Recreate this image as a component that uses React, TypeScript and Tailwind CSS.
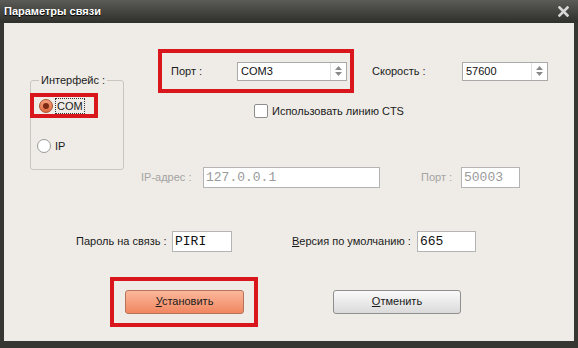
import React from "react";

const font = { fontFamily: '"Liberation Sans", Arial, sans-serif' };

const Combo = ({ value, width }: { value: string; width: string }) => (
  <div
    className={`${width} shrink-0 h-[19px] flex bg-white border border-[#a9a9a9] text-[11px] text-[#111]`}
  >
    <div className="flex-1 pl-[3px] leading-[17px]">{value}</div>
    <div className="w-[16px] flex flex-col items-center justify-center gap-[2px] border-l border-[#e2e2e2]">
      <svg width="7" height="4" viewBox="0 0 7 4">
        <path d="M0 4 L3.5 0 L7 4 Z" fill="#8a8a8a" />
      </svg>
      <svg width="7" height="4" viewBox="0 0 7 4">
        <path d="M0 0 L3.5 4 L7 0 Z" fill="#8a8a8a" />
      </svg>
    </div>
  </div>
);

const Field = ({
  value,
  width,
  disabled,
}: {
  value: string;
  width: string;
  disabled?: boolean;
}) => (
  <div
    className={`${width} shrink-0 h-[21px] bg-white border border-[#b4b4b4] pl-[2px] text-[13px] leading-[19px] ${
      disabled ? "text-[#9a9a9a]" : "text-[#111]"
    }`}
    style={{ fontFamily: '"Liberation Mono", "Courier New", monospace' }}
  >
    {value}
  </div>
);

export default function App() {
  return (
    <div className="w-[578px] h-[348px] bg-[#363632] flex flex-col" style={font}>
      <div className="h-[23px] flex items-center justify-between pl-[4px] pr-[9px] bg-gradient-to-b from-[#5b5b57] to-[#2f2f2c]">
        <span className="text-white font-bold text-[11px] [text-shadow:0_1px_1px_#000]">
          Параметры связи
        </span>
        <svg width="11" height="11" viewBox="0 0 11 11">
          <path d="M1.5 1.5 L9.5 9.5 M9.5 1.5 L1.5 9.5" stroke="#d8d8d6" strokeWidth="2.6" strokeLinecap="square" />
        </svg>
      </div>

      <div className="mx-[4px] h-[318px] bg-[#efece7] flex flex-col text-[11px] text-[#1a1a1a] whitespace-nowrap">
        <div className="flex items-start pt-[26px]">
          {/* interface group */}
          <div className="ml-[26px] mt-[31px] w-[94px] h-[90px] shrink-0 relative border border-[#c9c6be] rounded-[3px]">
            <span className="absolute -top-[8px] left-[8px] px-[2px] bg-[#efece7] leading-[14px]">
              Интерфейс :
            </span>
            <div className="-ml-px mt-[12px] w-[68px] h-[25px] border-4 border-[#d9161c] flex items-center pl-[5px]">
              <div className="w-[14px] h-[14px] rounded-full border border-[#a8522f] bg-gradient-to-b from-[#f4a07c] to-[#e06a3f] flex items-center justify-center">
                <div className="w-[6px] h-[6px] rounded-full bg-[#7c2a14]" />
              </div>
              <span className="ml-[2px] px-[1px] border border-dotted border-[#333] leading-[14px]">
                COM
              </span>
            </div>
            <div className="mt-[20px] ml-[6px] flex items-center">
              <div className="w-[14px] h-[14px] rounded-full border border-[#9a9a9a] bg-white" />
              <span className="ml-[4px]">IP</span>
            </div>
          </div>

          <div className="ml-[17px] flex flex-col">
            <div className="flex items-center">
              <div className="ml-[17px] w-[196px] h-[44px] shrink-0 border-4 border-[#d9161c] flex items-center pl-[9px]">
                <span className="w-[66px] shrink-0">Порт :</span>
                <Combo value="COM3" width="w-[110px]" />
              </div>
              <span className="ml-[18px] w-[90px] shrink-0">Скорость :</span>
              <Combo value="57600" width="w-[86px]" />
            </div>

            <div className="mt-[10px] ml-[113px] flex items-center">
              <div className="w-[14px] h-[14px] bg-white border border-[#8e8e8e] rounded-[2px]" />
              <span className="ml-[4px]">Использовать линию CTS</span>
            </div>

            <div className="mt-[47px] flex items-center">
              <span className="w-[62px] shrink-0 text-[#a3a3a3]">IP-адрес :</span>
              <Field value="127.0.0.1" width="w-[177px]" disabled />
              <span className="ml-[41px] w-[40px] shrink-0 text-[#a3a3a3]">Порт :</span>
              <Field value="50003" width="w-[59px]" disabled />
            </div>
          </div>
        </div>

        <div className="mt-[43px] flex items-center pl-[72px]">
          <span className="w-[96px] shrink-0">Пароль на связь :</span>
          <Field value="PIRI" width="w-[60px]" />
          <span className="ml-[60px] w-[125px] shrink-0">
            <span className="underline">В</span>ерсия по умолчанию :
          </span>
          <Field value="665" width="w-[59px]" />
        </div>

        <div className="mt-[25px] flex items-center">
          <div className="ml-[106px] w-[148px] h-[50px] shrink-0 border-4 border-[#d9161c] flex items-center pl-[11px]">
            <button className="w-[119px] h-[24px] rounded-[3px] border border-[#b7735a] bg-gradient-to-b from-[#fab89b] to-[#f08660] text-[11px] text-[#1a1a1a]">
              <span className="underline">У</span>становить
            </button>
          </div>
          <button className="ml-[75px] w-[128px] h-[24px] rounded-[3px] border border-[#8f8f8f] bg-gradient-to-b from-[#fafafa] to-[#dadada] text-[11px] text-[#1a1a1a]">
            <span className="underline">О</span>тменить
          </button>
        </div>
      </div>
    </div>
  );
}
